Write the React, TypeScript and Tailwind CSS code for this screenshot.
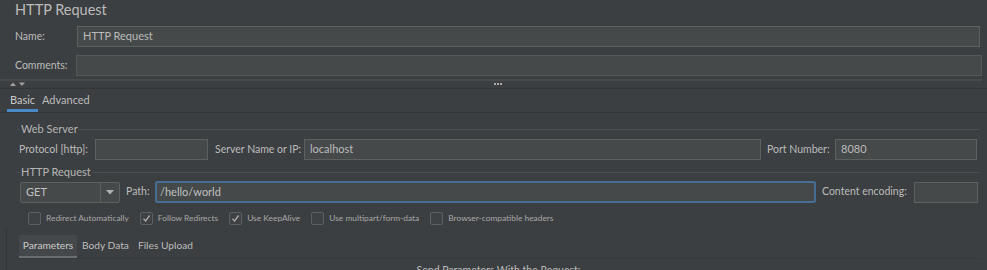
import React from "react";

const inputCls =
  "shrink-0 h-[21px] bg-[#45494a] border border-[#5e6060] text-[11px] text-[#bbbbbb] px-[5px] flex items-center whitespace-nowrap";
const lbl = "shrink-0 whitespace-nowrap text-[10.5px]";

function Check({ checked, label }: { checked?: boolean; label: string }) {
  return (
    <div className="flex items-center shrink-0">
      <div className="w-[13px] h-[13px] border border-[#5d5f60] bg-[#3f4244] rounded-[2px] flex items-center justify-center">
        {checked && (
          <svg width="9" height="9" viewBox="0 0 9 9">
            <path d="M1.5 4.8 L3.6 7 L7.6 1.5" fill="none" stroke="#a9a9a9" strokeWidth="1.3" />
          </svg>
        )}
      </div>
      <span className="ml-[5px] text-[8.4px] text-[#a8a8a8] whitespace-nowrap">{label}</span>
    </div>
  );
}

export default function App() {
  return (
    <div
      className="w-[987px] h-[270px] bg-[#3c3f41] overflow-hidden text-[#bbbbbb] relative"
      style={{ fontFamily: 'Lato, "Noto Sans", sans-serif' }}
    >
      {/* Title */}
      <div className="h-[19px] pl-[15px] text-[14.5px] leading-[19px] text-[#bbbbbb]">HTTP Request</div>
      {/* Name */}
      <div className="flex items-center mt-[7px] h-[21px]">
        <div className={lbl + " w-[77px] pl-[15px]"}>Name:</div>
        <div className={inputCls + " flex-1 mr-[7px]"}>HTTP Request</div>
      </div>
      {/* Comments */}
      <div className="flex items-center mt-[8px] h-[21px]">
        <div className={lbl + " w-[76px] pl-[15px]"}>Comments:</div>
        <div className={inputCls + " flex-1 mr-[5px] border-[#555858]"}></div>
      </div>
      {/* splitter */}
      <div className="mt-[3px] h-[2px] bg-[#47494b] mr-[5px]"></div>
      <div className="h-[8px] relative border-b border-[#333537]">
        <svg className="absolute left-[10px] top-[1px]" width="16" height="5" viewBox="0 0 16 5">
          <path d="M0 4 L3 0.5 L6 4 Z" fill="#a0a0a0" />
          <path d="M9 0.5 L15 0.5 L12 4 Z" fill="#a0a0a0" />
        </svg>
        <div className="absolute left-[494px] top-[2px] flex gap-[1px]">
          <div className="w-[2px] h-[2px] bg-[#aaaaaa]"></div>
          <div className="w-[2px] h-[2px] bg-[#aaaaaa]"></div>
          <div className="w-[2px] h-[2px] bg-[#aaaaaa]"></div>
        </div>
      </div>
      {/* Tabs */}
      <div className="h-[24px] flex items-end border-b border-[#323436]">
        <div className="ml-[7px] w-[31px] h-[24px] flex flex-col shrink-0">
          <div className="flex-1 flex items-center justify-center text-[11px] text-[#c8c8c8] pt-[4px]">Basic</div>
          <div className="h-[3px] bg-[#4a88c7]"></div>
        </div>
        <div className="ml-[4px] h-[24px] flex items-center pt-[4px] pb-[3px] text-[11px]">Advanced</div>
      </div>
      {/* Web Server group */}
      <div className="mt-[9px] flex items-center h-[14px] ml-[17px] mr-[7px]">
        <div className="w-[3px] h-px bg-[#4b4e50]"></div>
        <span className="px-[1px] text-[11px] text-[#b5b5b5] whitespace-nowrap">Web Server</span>
        <div className="flex-1 h-px bg-[#4b4e50]"></div>
      </div>
      <div className="mt-[3px] flex items-center h-[21px]">
        <div className={lbl + " w-[95px] pl-[19px]"}>Protocol [http]:</div>
        <div className={inputCls + " w-[113px]"}></div>
        <div className={lbl + " w-[96px] pl-[7px]"}>Server Name or IP:</div>
        <div className={inputCls + " w-[457px]"}>localhost</div>
        <div className={lbl + " w-[74px] pl-[6px]"}>Port Number:</div>
        <div className={inputCls + " w-[142px]"}>8080</div>
      </div>
      {/* HTTP Request group */}
      <div className="mt-[5px] flex items-center h-[14px] ml-[17px] mr-[7px]">
        <div className="w-[3px] h-px bg-[#4b4e50]"></div>
        <span className="px-[1px] text-[11px] text-[#b5b5b5] whitespace-nowrap">HTTP Request</span>
        <div className="flex-1 h-px bg-[#4b4e50]"></div>
      </div>
      <div className="mt-[2px] flex items-center h-[22px]">
        <div className="shrink-0 ml-[20px] w-[100px] h-[21px] bg-[#45494a] border border-[#5e6060] rounded-[2px] flex items-center">
          <div className="w-[79px] pl-[5px] text-[11px] text-[#c0c0c0]">GET</div>
          <div className="w-px h-full bg-[#5e6060]"></div>
          <div className="flex-1 flex items-center justify-center">
            <svg width="8" height="5" viewBox="0 0 8 5">
              <path d="M0 0 L8 0 L4 4.5 Z" fill="#b0b0b0" />
            </svg>
          </div>
        </div>
        <div className={lbl + " w-[35px] pl-[6px]"}>Path:</div>
        <div className="shrink-0 h-[22px] w-[661px] bg-[#45494a] border-2 border-[#466d94] rounded-[2px] text-[11px] text-[#c0c0c0] pl-[3px] flex items-center">
          /hello/world
        </div>
        <div className={lbl + " w-[98px] pl-[6px]"}>Content encoding:</div>
        <div className={inputCls + " w-[64px]"}></div>
      </div>
      {/* Checkboxes */}
      <div className="mt-[9px] flex items-center h-[13px] ml-[28px] gap-[11px]">
        <Check label="Redirect Automatically" />
        <Check checked label="Follow Redirects" />
        <Check checked label="Use KeepAlive" />
        <Check label="Use multipart/form-data" />
        <Check label="Browser-compatible headers" />
      </div>
      {/* Sub tabs */}
      <div className="mt-[10px] ml-[19px] mr-[7px] h-[24px] flex border-b border-[#36383a]">
        <div className="w-[58px] bg-[#45484a] flex flex-col shrink-0">
          <div className="flex-1 flex items-center justify-center text-[10.2px] text-[#c8c8c8]">Parameters</div>
          <div className="h-[2px] bg-[#6b6e70]"></div>
        </div>
        <div className="ml-[5px] flex items-center pb-[2px] text-[10.2px] whitespace-nowrap">Body Data</div>
        <div className="ml-[9px] flex items-center pb-[2px] text-[10.2px] whitespace-nowrap">Files Upload</div>
      </div>
      <div className="text-center text-[10.5px] leading-[14px] mt-[4px] pl-[10px] whitespace-nowrap">Send Parameters With the Request:</div>
      <div className="absolute left-[6px] top-[228px] w-px h-[42px] bg-[#333537]"></div>
    </div>
  );
}
